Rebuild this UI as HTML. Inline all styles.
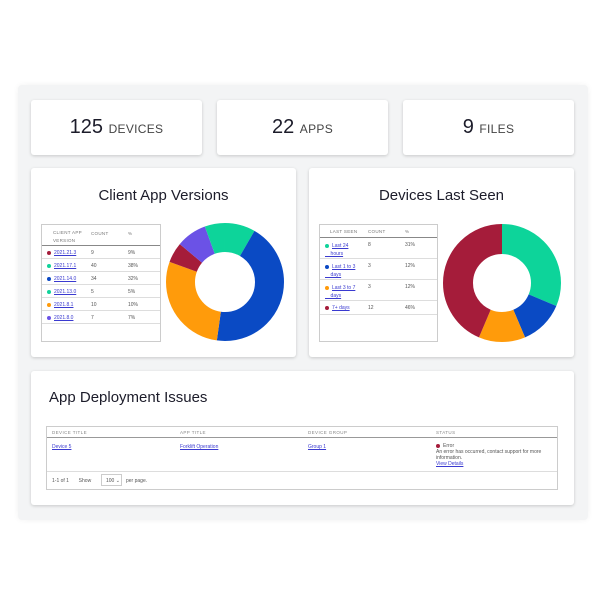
<!DOCTYPE html>
<html><head><style>
*{margin:0;padding:0;box-sizing:border-box}
body{width:605px;height:605px;background:#fff;font-family:"Liberation Sans",sans-serif;position:relative;overflow:hidden;color:#222}
.a{position:absolute}
.panel{left:18px;top:85px;width:570px;height:435px;background:#f3f4f5;border-radius:4px;box-shadow:0 0 6px rgba(0,0,0,.06)}
.card{background:#fff;border-radius:3px;box-shadow:0 1px 3px rgba(0,0,0,.18)}
.stat{top:100px;width:171px;height:55px;text-align:center;line-height:55px;font-size:20px;color:#1c1c2a}
.stat span{font-size:12px;color:#444;letter-spacing:.3px}
.title{font-size:15px;color:#1c1c2a;text-align:center}
.tbl{border:1px solid #ccc;background:#fff;font-size:5px;color:#555}
.l{color:#3a3ad0;text-decoration:underline}
.d{display:inline-block;width:4px;height:4px;border-radius:50%;margin-right:3px;vertical-align:middle}
.row{position:absolute;left:0;right:0;border-bottom:1px solid #ddd}
.row div{position:absolute}
</style></head><body>
<div class="a panel"></div>
<div class="a card stat" style="left:31px">125 <span>DEVICES</span></div>
<div class="a card stat" style="left:217px">22 <span>APPS</span></div>
<div class="a card stat" style="left:403px">9 <span>FILES</span></div>

<div class="a card" style="left:31px;top:168px;width:265px;height:189px"></div>
<div class="a title" style="left:31px;top:187px;width:265px">Client App Versions</div>
<div class="a tbl" style="left:41px;top:224px;width:120px;height:118px">
 <div class="row" style="top:0;height:21px;border-bottom:1px solid #888;color:#777;font-size:4.5px;letter-spacing:.3px"><div style="left:11px;top:4px;line-height:8px">CLIENT APP<br>VERSION</div><div style="left:49px;top:6px">COUNT</div><div style="left:86px;top:6px">%</div></div>
 <div class="row" style="top:21px;height:13px"><div style="left:5px;top:4px"><i class="d" style="background:#a51c3a"></i><span class="l">2021.21.3</span></div><div style="left:49px;top:4px">9</div><div style="left:86px;top:4px">9%</div></div>
 <div class="row" style="top:34px;height:13px"><div style="left:5px;top:4px"><i class="d" style="background:#10d39a"></i><span class="l">2021.17.1</span></div><div style="left:49px;top:4px">40</div><div style="left:86px;top:4px">38%</div></div>
 <div class="row" style="top:47px;height:13px"><div style="left:5px;top:4px"><i class="d" style="background:#0a48c4"></i><span class="l">2021.14.0</span></div><div style="left:49px;top:4px">34</div><div style="left:86px;top:4px">32%</div></div>
 <div class="row" style="top:60px;height:13px"><div style="left:5px;top:4px"><i class="d" style="background:#10d39a"></i><span class="l">2021.13.0</span></div><div style="left:49px;top:4px">5</div><div style="left:86px;top:4px">5%</div></div>
 <div class="row" style="top:73px;height:13px"><div style="left:5px;top:4px"><i class="d" style="background:#ff9a0a"></i><span class="l">2021.8.1</span></div><div style="left:49px;top:4px">10</div><div style="left:86px;top:4px">10%</div></div>
 <div class="row" style="top:86px;height:13px"><div style="left:5px;top:4px"><i class="d" style="background:#6b52e6"></i><span class="l">2021.8.0</span></div><div style="left:49px;top:4px">7</div><div style="left:86px;top:4px">7%</div></div>
</div>
<svg class="a" style="left:166px;top:223px" width="118" height="118" viewBox="0 0 118 118">
<g transform="rotate(-90 59 59)" fill="none" stroke-width="29">
<circle cx="59" cy="59" r="44.5" pathLength="360" stroke="#0dd49a" stroke-dasharray="30 330"/>
<circle cx="59" cy="59" r="44.5" pathLength="360" stroke="#0a4ac4" stroke-dasharray="158 202" stroke-dashoffset="-30"/>
<circle cx="59" cy="59" r="44.5" pathLength="360" stroke="#ff9b0b" stroke-dasharray="102 258" stroke-dashoffset="-188"/>
<circle cx="59" cy="59" r="44.5" pathLength="360" stroke="#a51c3a" stroke-dasharray="20 340" stroke-dashoffset="-290"/>
<circle cx="59" cy="59" r="44.5" pathLength="360" stroke="#6b52e6" stroke-dasharray="30 330" stroke-dashoffset="-310"/>
<circle cx="59" cy="59" r="44.5" pathLength="360" stroke="#0dd49a" stroke-dasharray="20 340" stroke-dashoffset="-340"/>
</g></svg>

<div class="a card" style="left:309px;top:168px;width:265px;height:189px"></div>
<div class="a title" style="left:309px;top:187px;width:265px">Devices Last Seen</div>
<div class="a tbl" style="left:319px;top:224px;width:119px;height:118px">
 <div class="row" style="top:0;height:13px;border-bottom:1px solid #888;color:#777;font-size:4.5px;letter-spacing:.3px"><div style="left:10px;top:4px">LAST SEEN</div><div style="left:48px;top:4px">COUNT</div><div style="left:85px;top:4px">%</div></div>
 <div class="row" style="top:13px;height:21px"><div style="left:5px;top:4px;line-height:8px"><i class="d" style="background:#10d39a"></i><span class="l">Last 24<br>&nbsp;&nbsp;&nbsp;&nbsp;hours</span></div><div style="left:48px;top:4px">8</div><div style="left:85px;top:4px">31%</div></div>
 <div class="row" style="top:34px;height:21px"><div style="left:5px;top:4px;line-height:8px"><i class="d" style="background:#0a48c4"></i><span class="l">Last 1 to 3<br>&nbsp;&nbsp;&nbsp;&nbsp;days</span></div><div style="left:48px;top:4px">3</div><div style="left:85px;top:4px">12%</div></div>
 <div class="row" style="top:55px;height:21px"><div style="left:5px;top:4px;line-height:8px"><i class="d" style="background:#ff9a0a"></i><span class="l">Last 3 to 7<br>&nbsp;&nbsp;&nbsp;&nbsp;days</span></div><div style="left:48px;top:4px">3</div><div style="left:85px;top:4px">12%</div></div>
 <div class="row" style="top:76px;height:14px"><div style="left:5px;top:4px"><i class="d" style="background:#a51c3a"></i><span class="l">7+ days</span></div><div style="left:48px;top:4px">12</div><div style="left:85px;top:4px">46%</div></div>
</div>
<svg class="a" style="left:443px;top:224px" width="118" height="118" viewBox="0 0 118 118">
<g transform="rotate(-90 59 59)" fill="none" stroke-width="30">
<circle cx="59" cy="59" r="44" pathLength="360" stroke="#0dd49a" stroke-dasharray="113 247"/>
<circle cx="59" cy="59" r="44" pathLength="360" stroke="#0a4ac4" stroke-dasharray="44 316" stroke-dashoffset="-113"/>
<circle cx="59" cy="59" r="44" pathLength="360" stroke="#ff9b0b" stroke-dasharray="46 314" stroke-dashoffset="-157"/>
<circle cx="59" cy="59" r="44" pathLength="360" stroke="#a51c3a" stroke-dasharray="157 203" stroke-dashoffset="-203"/>
</g></svg>

<div class="a card" style="left:31px;top:371px;width:543px;height:134px"></div>
<div class="a" style="left:49px;top:389px;font-size:15px;color:#1c1c2a">App Deployment Issues</div>
<div class="a tbl" style="left:46px;top:426px;width:512px;height:64px">
 <div class="row" style="top:0;height:11px;border-bottom:1px solid #999;color:#888;font-size:4.5px;letter-spacing:.4px"><div style="left:5px;top:3px">DEVICE TITLE</div><div style="left:133px;top:3px">APP TITLE</div><div style="left:261px;top:3px">DEVICE GROUP</div><div style="left:389px;top:3px">STATUS</div></div>
 <div class="row" style="top:11px;height:34px"><div style="left:5px;top:6px" class="l">Device 5</div><div style="left:133px;top:6px" class="l">Forklift Operation</div><div style="left:261px;top:6px" class="l">Group 1</div>
  <div style="left:389px;top:5px;line-height:6px;width:120px"><i class="d" style="background:#a51c3a"></i>Error<br>An error has occurred, contact support for more information.<br><span class="l">View Details</span></div></div>
 <div style="position:absolute;left:5px;top:51px">1-1 of 1 &nbsp;&nbsp;&nbsp;&nbsp;&nbsp; Show</div>
 <div style="position:absolute;left:54px;top:47px;width:21px;height:12px;border:1px solid #ccc;padding:3px 0 0 4px">100 ⌄</div>
 <div style="position:absolute;left:79px;top:51px">per page.</div>
</div>
</body></html>
